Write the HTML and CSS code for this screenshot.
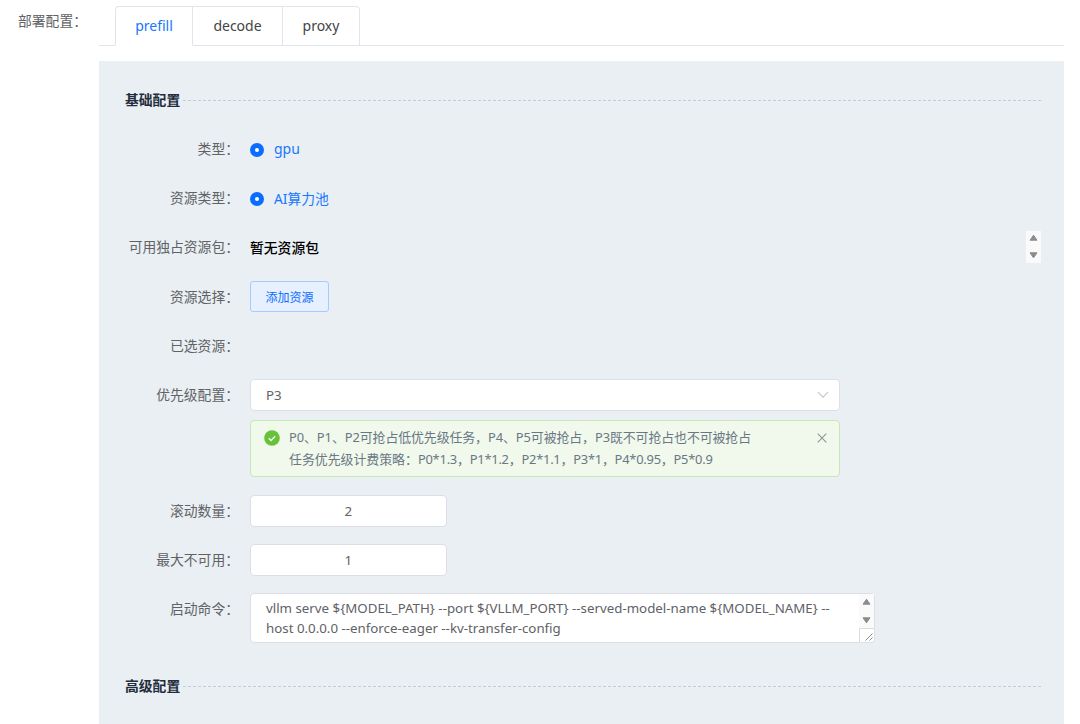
FILE: index.html
```html
<!DOCTYPE html>
<html lang="zh-CN">
<head>
    <meta charset="UTF-8">
    <meta name="viewport" content="width=device-width, initial-scale=1.0">
    <title>部署配置</title>
    <link rel="stylesheet" href="styles.css">
</head>
<body>
    <div class="deploy">
        <div class="deploy-label">部署配置：</div>
        <div class="deploy-content">
            <div class="tabs">
                <div class="tab active">prefill</div>
                <div class="tab tab-decode">decode</div>
                <div class="tab tab-proxy">proxy</div>
            </div>

            <div class="panel">
                <div class="section-title"><span>基础配置</span></div>

                <div class="form-item">
                    <div class="label">类型：</div>
                    <div class="control radio"><i class="dot"></i><span class="gpu">gpu</span></div>
                </div>
                <div class="form-item">
                    <div class="label">资源类型：</div>
                    <div class="control radio"><i class="dot"></i><span>AI算力池</span></div>
                </div>
                <div class="form-item">
                    <div class="label">可用独占资源包：</div>
                    <div class="control packages">
                        <span>暂无资源包</span>
                        <div class="scrollbar">
                            <svg width="15" height="32" viewBox="0 0 15 32"><path d="M7.5 4.2 11 9.2H4zM7.5 26.8 11 21.8H4z" fill="#8b8b8b" stroke="#8b8b8b" stroke-linejoin="round"/></svg>
                        </div>
                    </div>
                </div>
                <div class="form-item">
                    <div class="label">资源选择：</div>
                    <div class="control"><button type="button" class="add-btn">添加资源</button></div>
                </div>
                <div class="form-item">
                    <div class="label">已选资源：</div>
                    <div class="control"></div>
                </div>
                <div class="form-item">
                    <div class="label">优先级配置：</div>
                    <div class="control">
                        <div class="select">
                            <span>P3</span>
                            <svg width="12" height="8" viewBox="0 0 12 8"><path d="M1 1.2l5 5 5-5" fill="none" stroke="#c0c4cc" stroke-width="1.1"/></svg>
                        </div>
                        <div class="alert">
                            <svg class="alert-icon" width="16" height="16" viewBox="0 0 16 16"><circle cx="8" cy="8" r="7.8" fill="#67c23a"/><path d="M4.7 8.2l2.3 2.2 4.2-4.2" fill="none" stroke="#f0f9eb" stroke-width="1.4"/></svg>
                            <div class="alert-text">
                                <div class="line-one">P0、P1、P2可抢占低优先级任务，P4、P5可被抢占，P3既不可抢占也不可被抢占</div>
                                <div class="line-two">任务优先级计费策略：<span>P0*1.3，P1*1.2，P2*1.1，P3*1，P4*0.95，P5*0.9</span></div>
                            </div>
                            <svg class="alert-close" width="10" height="10" viewBox="0 0 10 10"><path d="M.7.7l8.6 8.6M9.3.7L.7 9.3" stroke="#909399" stroke-width="1.1"/></svg>
                        </div>
                    </div>
                </div>
                <div class="form-item">
                    <div class="label">滚动数量：</div>
                    <div class="control"><div class="number">2</div></div>
                </div>
                <div class="form-item">
                    <div class="label">最大不可用：</div>
                    <div class="control"><div class="number">1</div></div>
                </div>
                <div class="form-item">
                    <div class="label">启动命令：</div>
                    <div class="control">
                        <div class="command">
                            <div class="command-text">
                                <div class="cmd-one">vllm serve ${MODEL_PATH} --port ${VLLM_PORT} --served-model-name ${MODEL_NAME} --</div>
                                <div class="cmd-two">host 0.0.0.0 --enforce-eager --kv-transfer-config</div>
                            </div>
                            <svg width="15" height="48" viewBox="0 0 15 48"><path d="M0 0h15v34H0z" fill="#fafafa"/><path d="M7.5 5.2 11 10.2H4zM7.5 28.8 11 23.8H4z" fill="#8b8b8b" stroke="#8b8b8b" stroke-linejoin="round"/><path d="M.5 48V34.5H15" fill="none" stroke="#dcdcdc"/><path d="M6.5 46.5l7-7M10.5 46.5l3-3" stroke="#8b8b8b"/></svg>
                        </div>
                    </div>
                </div>

                <div class="section-title advanced"><span>高级配置</span></div>
            </div>
        </div>
    </div>
</body>
</html>
```
FILE: styles.css
```css
* {
    box-sizing: border-box;
}
body {
    margin: 0;
    height: 724px;
    overflow: hidden;
    background: #fff;
    color: #606266;
    font-family: "Noto Sans", "Noto Sans CJK SC", sans-serif;
    font-size: 13.8px;
}
svg {
    display: block;
    flex: none;
}
.deploy {
    display: flex;
    padding: 6px 16px 0 18px;
}
.deploy-label {
    width: 81px;
    line-height: 30px;
    white-space: nowrap;
}
.deploy-content {
    width: 965px;
}
.tabs {
    display: flex;
    height: 40px;
    padding-left: 16px;
    background: linear-gradient(#e0e5ec, #e0e5ec) 0 100% / 100% 1px no-repeat;
}
.tab {
    width: 90px;
    border: 1px solid #e0e5ec;
    border-left: none;
    text-align: center;
    line-height: 38px;
    font-size: 14px;
    color: #444;
}
.tab.active {
    width: 78px;
    border-left: 1px solid #e0e5ec;
    border-bottom-color: #fff;
    border-radius: 4px 0 0 0;
    background: #fff;
    color: #1677ff;
}
.tab-proxy {
    width: 77px;
    border-radius: 0 4px 0 0;
}
.panel {
    height: 680px;
    margin-top: 15px;
    padding: 29px 23px 0 26px;
    background: #eaeff3;
}
.section-title {
    display: flex;
    align-items: center;
    height: 20px;
    margin-bottom: 22.8px;
    color: #1f2d3d;
    font-weight: bold;
}
.section-title span {
    padding-bottom: 2px;
}
.section-title::after {
    content: "";
    flex: 1;
    height: 1px;
    margin-left: 3px;
    background: repeating-linear-gradient(90deg, #bfcedc 0 3px, transparent 3px 5px);
}
.form-item {
    display: flex;
    margin-bottom: 17.7px;
}
.label {
    width: 114px;
    margin-right: 11px;
    line-height: 31.5px;
    text-align: right;
    white-space: nowrap;
}
.control {
    flex: 1;
    min-height: 31.5px;
}
.radio {
    display: flex;
    align-items: center;
    color: #1677ff;
}
.dot {
    width: 14px;
    height: 14px;
    margin: 2px 10px 0 0;
    border: 5px solid #0b6dff;
    border-radius: 50%;
    background: #fff;
}
.gpu {
    font-size: 14px;
}
.packages {
    display: flex;
    justify-content: space-between;
    align-items: center;
    color: #000;
    font-weight: 500;
}
.scrollbar {
    height: 32px;
    background: #fafafa;
}
.add-btn {
    display: block;
    width: 79px;
    height: 31.5px;
    padding: 0;
    border: 1px solid #a6cbff;
    border-radius: 3px;
    background: #e6f0ff;
    color: #0b6dff;
    font-family: inherit;
    font-size: 12px;
}
.select {
    display: flex;
    align-items: center;
    justify-content: space-between;
    width: 589.5px;
    height: 31.5px;
    padding: 0 10px 0 15px;
    border: 1px solid #dcdfe6;
    border-radius: 4px;
    background: #fff;
    font-size: 13.3px;
}
.alert {
    display: flex;
    width: 589.5px;
    height: 57px;
    margin-top: 9.7px;
    padding: 6px 12px 0 13px;
    border: 1px solid #c5e8b4;
    border-radius: 4px;
    background: #f0f9eb;
    color: #6b7785;
    font-size: 12.9px;
    line-height: 21.7px;
    white-space: nowrap;
}
.alert-icon {
    margin: 3px 9px 0 0;
}
.alert-text {
    flex: 1;
}
.line-one {
    letter-spacing: -0.07px;
}
.line-two span {
    letter-spacing: -0.23px;
}
.alert-close {
    margin-top: 6px;
}
.number {
    width: 196.5px;
    height: 31.5px;
    border: 1px solid #dcdfe6;
    border-radius: 4px;
    background: #fff;
    line-height: 30px;
    text-align: center;
    font-size: 13.3px;
}
.command {
    display: flex;
    justify-content: space-between;
    width: 625px;
    height: 50px;
    padding-left: 15px;
    border: 1px solid #dcdfe6;
    border-radius: 4px;
    background: #fff;
    font-size: 13.3px;
    line-height: 20px;
    white-space: nowrap;
}
.command-text {
    padding-top: 4px;
}
.advanced {
    margin-top: 33px;
}
```
